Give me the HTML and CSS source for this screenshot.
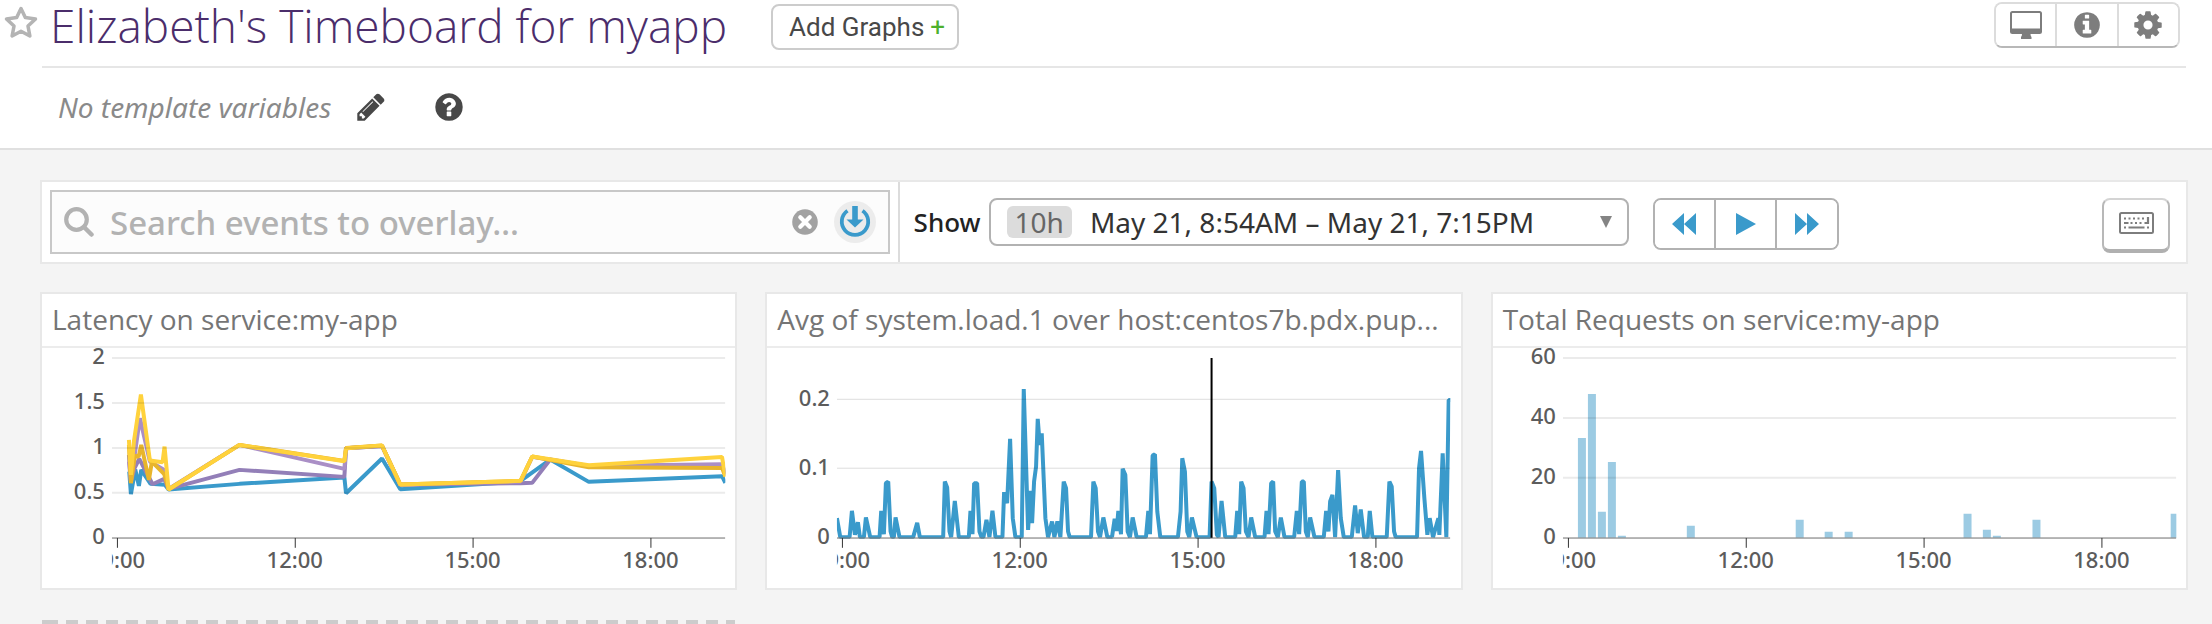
FILE: index.html
```html
<!DOCTYPE html>
<html lang="en">
<head>
<meta charset="utf-8">
<title>Elizabeth's Timeboard for myapp</title>
<link rel="stylesheet" href="styles.css">
</head>
<body>
<header class="header">
  <div class="title-row">
    <button class="star" aria-label="Favorite">
      <svg width="36" height="36" viewBox="0 0 36 36"><path d="M18 4.500 22.300 13.600 32.500 15 25 22.100 26.900 32 18 27.200 9.100 32 11 22.100 3.500 15 13.700 13.600Z" fill="none" stroke="#b4b4b4" stroke-width="3.500" stroke-linejoin="round"/></svg>
    </button>
    <h1 class="title">Elizabeth's Timeboard for myapp</h1>
    <button class="add-graphs">Add Graphs <span class="plus">+</span></button>
    <div class="button-group actions">
      <button aria-label="Full screen">
        <svg width="32" height="28" viewBox="0 0 32 28"><path fill="#7d7d7d" fill-rule="evenodd" d="M2.500 0h27A2.500 2.500 0 0 1 32 2.500v18a2.500 2.500 0 0 1-2.500 2.500H20.500q0 2 1 3v2H11v-2q1-1 1-3H2.500A2.500 2.500 0 0 1 0 20.500v-18A2.500 2.500 0 0 1 2.500 0zM2 2.500v15h28v-15q0-.5-.5-.5h-27q-.5 0-.5.500z"/></svg>
      </button>
      <button aria-label="Information">
        <svg width="30" height="30" viewBox="0 0 1792 1792"><path fill="#7d7d7d" d="M1152 1376v-160q0-14-9-23t-23-9h-96v-512q0-14-9-23t-23-9h-320q-14 0-23 9t-9 23v160q0 14 9 23t23 9h96v320h-96q-14 0-23 9t-9 23v160q0 14 9 23t23 9h448q14 0 23-9t9-23zm-128-896v-160q0-14-9-23t-23-9h-192q-14 0-23 9t-9 23v160q0 14 9 23t23 9h192q14 0 23-9t9-23zm640 416q0 209-103 385.500t-279.500 279.500-385.500 103-385.500-103-279.500-279.500-103-385.500 103-385.500 279.500-279.500 385.500-103 385.500 103 279.500 279.500 103 385.500z"/></svg>
      </button>
      <button aria-label="Settings">
        <svg width="32" height="32" viewBox="0 0 1792 1792"><path fill="#7d7d7d" d="M1152 896q0-106-75-181t-181-75-181 75-75 181 75 181 181 75 181-75 75-181zm512-109v222q0 12-8 23t-20 13l-185 28q-19 54-39 91 35 50 107 138 10 12 10 25t-9 23q-27 37-99 108t-94 71q-12 0-26-9l-138-108q-44 23-91 38-16 136-29 186-7 28-36 28h-222q-14 0-24.500-8.500t-11.500-21.500l-28-184q-49-16-90-37l-141 107q-10 9-25 9-14 0-25-11-126-114-165-168-7-10-7-23 0-12 8-23 15-21 51-66.500t54-70.500q-27-50-41-99l-183-27q-13-2-21-12.500t-8-23.500v-222q0-12 8-23t19-13l186-28q14-46 39-92-40-57-107-138-10-12-10-24 0-10 9-23 26-36 98.500-107.500t94.500-71.500q13 0 26 10l138 107q44-23 91-38 16-136 29-186 7-28 36-28h222q14 0 24.500 8.500t11.500 21.500l28 184q49 16 90 37l142-107q9-9 24-9 13 0 25 10 129 119 165 170 7 8 7 22 0 12-8 23-15 21-51 66.500t-54 70.500q26 50 41 98l183 28q13 2 21 12.500t8 23.500z"/></svg>
      </button>
    </div>
  </div>
  <div class="variables">
    <em>No template variables</em>
    <button class="plain" aria-label="Edit template variables">
      <svg width="32" height="32" viewBox="0 0 1792 1792"><path fill="#484848" d="M491 1536l91-91-235-235-91 91v107h128v128h107zm523-928q0-22-22-22-10 0-17 7l-542 542q-7 7-7 17 0 22 22 22 10 0 17-7l542-542q7-7 7-17zm-54-192l416 416-832 832h-416v-416zm683 96q0 53-37 90l-166 166-416-416 166-165q36-38 90-38 53 0 91 38l235 234q37 39 37 91z"/></svg>
    </button>
    <button class="plain help" aria-label="Help">
      <svg width="32" height="32" viewBox="0 0 1792 1792"><path fill="#484848" d="M1024 1376v-192q0-14-9-23t-23-9h-192q-14 0-23 9t-9 23v192q0 14 9 23t23 9h192q14 0 23-9t9-23zm256-672q0-88-55.500-163t-138.500-116-170-41q-243 0-371 213-15 24 8 42l132 100q7 6 19 6 16 0 25-12 53-68 86-92 34-24 86-24 48 0 85.500 26t37.500 59q0 38-20 61t-68 45q-63 28-115.500 86.500t-52.500 125.500v36q0 14 9 23t23 9h192q14 0 23-9t9-23q0-19 21.500-49.500t54.500-49.500q32-18 49-28.500t46-35 44.500-48 28-60.500 12.500-81zm384 192q0 209-103 385.500t-279.500 279.500-385.500 103-385.500-103-279.500-279.500-103-385.500 103-385.500 279.500-279.500 385.500-103 385.500 103 279.500 279.500 103 385.500z"/></svg>
    </button>
  </div>
</header>

<main class="board">
  <section class="toolbar">
    <div class="search-area">
      <div class="search-box">
        <svg class="search-icon" width="30" height="30" viewBox="0 0 30 30"><circle cx="12.500" cy="12.500" r="10.300" fill="none" stroke="#b2b2b2" stroke-width="4.200"/><path d="M20 20l7.500 7.500" stroke="#b2b2b2" stroke-width="4.500" stroke-linecap="round"/></svg>
        <input class="search-input" type="text" aria-label="Search events to overlay" placeholder="Search events to overlay…">
        <button class="plain" aria-label="Clear search">
          <svg width="26" height="26" viewBox="0 0 26 26"><circle cx="13" cy="13" r="12.800" fill="#a2a2a2"/><path d="M8.300 8.300l9.400 9.400M17.700 8.300l-9.400 9.400" stroke="#fff" stroke-width="4.200" stroke-linecap="round"/></svg>
        </button>
        <button class="plain" aria-label="Load events">
          <svg width="42" height="42" viewBox="0 0 42 42"><circle cx="21" cy="21" r="21" fill="#ececec"/><path d="M13.500 9.800A13.200 13.200 0 1 0 28.500 9.800" fill="none" stroke="#3a9acb" stroke-width="3.800"/><path d="M18.200 5h5.600v13.500h5.700L21 26.500l-8.500-8h5.700z" fill="#3a9acb"/></svg>
        </button>
      </div>
    </div>
    <div class="time-area">
      <label class="show-label" for="range">Show</label>
      <div class="range">
        <span class="chip">10h</span>
        <select id="range" class="range-select"><option>May 21, 8:54AM – May 21, 7:15PM</option></select>
        <svg class="caret" width="14" height="12" viewBox="0 0 14 12"><path d="M1 0h12L7 12z" fill="#848484"/></svg>
      </div>
      <div class="button-group playback">
        <button aria-label="Back"><svg width="24" height="22" viewBox="0 0 24 22"><path d="M12 0v22L0 11zM24 0v22L12 11z" fill="#3a9acb"/></svg></button>
        <button aria-label="Play"><svg width="22" height="22" viewBox="0 0 22 22"><path d="M1 0v22l20-11z" fill="#3a9acb"/></svg></button>
        <button aria-label="Forward"><svg width="24" height="22" viewBox="0 0 24 22"><path d="M0 0v22l12-11zM12 0v22l12-11z" fill="#3a9acb"/></svg></button>
      </div>
      <button class="keyboard" aria-label="Keyboard shortcuts">
        <svg width="35" height="22" viewBox="0 0 35 22"><rect x="1" y="1" width="33" height="20" rx="1.500" fill="none" stroke="#7d7d7d" stroke-width="2"/><path d="M5 6.500h2M9.500 6.500h2M14 6.500h2M18.500 6.500h2M23 6.500h2M5 11h4.500M11.500 11h2M16 11h2M20.500 11h2M25.500 11h4.500M29 5v7M5 15.500h2M9.500 15.500h16M28 15.500h2" stroke="#7d7d7d" stroke-width="2.200"/></svg>
      </button>
    </div>
  </section>

  <section class="graphs">
    <article class="graph">
      <h2 class="graph-title">Latency on service:my-app</h2>
      <svg class="plot" viewBox="0 0 694 240">
        <svg x="70" y="0" width="614" height="191" viewBox="0 0 1842 573">
          <g class="lines">
            <polyline class="blue" points="52,371 57,439 70,365 81,414 88,366 116,408 159,411 170,425 383,408 698,389 703,436 811,332 866,424 1224,401 1316,335 1432,402 1832,385 1842,405"/>
            <polyline class="violet" points="51,321 57,401 68,361 82,333 122,409 157,393 170,423 383,366 698,387 703,301 811,294 866,411 1227,406 1262,405 1316,335 1432,354 1832,351 1842,380"/>
            <polyline class="lilac" points="51,341 57,401 84,211 114,341 157,366 170,423 383,291 698,363 703,301 811,294 866,411 1227,401 1262,327 1432,354 1832,349 1842,375"/>
            <polyline class="gold" points="51,291 57,406 69,323 80,327 88,291 111,396 120,341 157,379 170,425 383,291 698,339 703,300 811,293 866,410 1227,399 1262,326 1432,358 1832,360 1842,386"/>
            <polyline class="yellow" points="51,276 57,381 66,281 87,140 114,338 152,343 158,296 170,425 383,291 698,340 703,301 811,293 866,410 1227,399 1262,326 1432,352 1832,327 1842,386"/>
          </g>
          <path class="grid" d="M0 30H1842M0 165H1842M0 300H1842M0 435H1842"/>
          <path class="axis" d="M0 571H1842"/>
        </svg>
        <g class="y-labels"><text x="63" y="16">2</text><text x="63" y="61">1.5</text><text x="63" y="106">1</text><text x="63" y="151">0.5</text><text x="63" y="196">0</text></g>
        <svg x="70" y="190" width="614" height="50"><path class="ticks" d="M5.500 0v10M183.500 0v10M361.500 0v10M539.500 0v10"/><g class="x-labels"><text x="5" y="30">09:00</text><text x="183" y="30">12:00</text><text x="361" y="30">15:00</text><text x="539" y="30">18:00</text></g></svg>
      </svg>
    </article>

    <article class="graph">
      <h2 class="graph-title">Avg of system.load.1 over host:centos7b.pdx.pup...</h2>
      <svg class="plot" viewBox="0 0 694 240">
        <svg x="70" y="0" width="614" height="191" viewBox="0 0 1842 573">
          <g class="lines">
            <polyline class="blue" transform="translate(-234 -189)" points="234,700 244,757 272,757 279,678 288,750 297,712 303,757 315,757 321,698 334,757 362,757 367,678 375,748 381,595 388,590 395,740 400,757 405,757 410,698 422,757 463,757 475,714 483,757 553,757 558,590 565,608 572,740 577,757 588,648 600,757 630,757 635,678 641,748 646,595 655,595 662,740 668,757 674,757 683,705 692,757 701,678 710,757 731,757 736,622 745,655 754,462 762,700 770,757 789,757 795,312 808,735 815,618 820,715 826,590 832,545 837,402 843,480 849,445 860,700 868,757 880,710 887,757 896,710 905,757 915,590 922,610 928,740 933,757 997,757 1004,590 1011,610 1018,740 1024,757 1034,698 1046,757 1062,757"/>
            <polyline class="blue" transform="translate(816 -189)" points="10,757 18,702 24,738 29,678 37,748 42,552 50,570 57,740 64,757 72,698 84,757 112,757 119,678 124,748 132,512 139,508 146,680 155,757 208,757 216,680 221,520 229,560 236,740 242,757 250,698 264,757 303,757 309,590 317,610 325,750 330,757 339,648 350,757 380,757 386,678 392,748 398,590 405,610 412,740 420,757 428,698 440,757 468,757 474,678 480,748 488,595 494,590 500,740 508,757 517,698 528,757 557,757 565,678 572,748 580,590 586,590 592,740 598,757 605,698 618,757 646,757 653,678 660,740 665,650 672,630 680,757 689,556 697,700 706,757 730,757 740,662 748,745 757,674 767,757 778,757 784,678 792,757 835,757 843,590 850,605 857,740 862,757 926,757 932,550 938,498 948,640 957,750 964,700 974,757 990,700 993,750 1003,505 1014,757 1021,345 1030,345"/>
          </g>
          <path class="grid thin" d="M0 154H1842M0 361H1842"/>
          <path class="axis" d="M0 571H1842"/>
          <path class="cursor" d="M1125 30V570"/>
        </svg>
        <g class="y-labels"><text x="63" y="58">0.2</text><text x="63" y="127">0.1</text><text x="63" y="196">0</text></g>
        <svg x="70" y="190" width="614" height="50"><path class="ticks" d="M5.500 0v10M183.500 0v10M361.500 0v10M539.500 0v10"/><g class="x-labels"><text x="5" y="30">09:00</text><text x="183" y="30">12:00</text><text x="361" y="30">15:00</text><text x="539" y="30">18:00</text></g></svg>
      </svg>
    </article>

    <article class="graph">
      <h2 class="graph-title">Total Requests on service:my-app</h2>
      <svg class="plot" viewBox="0 0 694 240">
        <svg x="70" y="0" width="614" height="191" viewBox="0 0 1842 573">
          <path class="bars" d="M45 270h24v300h-24zM75 138h24v432h-24zM105 492h24v78h-24zM135 342h24v228h-24zM165 564h24v6h-24zM372 534h24v36h-24zM699 516h24v54h-24zM786 552h24v18h-24zM846 552h24v18h-24zM1203 498h24v72h-24zM1261 546h24v24h-24zM1291 564h24v6h-24zM1410 516h24v54h-24zM1825 498h24v72h-24z"/>
          <path class="grid" d="M0 30H1842M0 210H1842M0 390H1842"/>
          <path class="axis" d="M0 571H1842"/>
        </svg>
        <g class="y-labels"><text x="63" y="16">60</text><text x="63" y="76">40</text><text x="63" y="136">20</text><text x="63" y="196">0</text></g>
        <svg x="70" y="190" width="614" height="50"><path class="ticks" d="M5.500 0v10M183.500 0v10M361.500 0v10M539.500 0v10"/><g class="x-labels"><text x="5" y="30">09:00</text><text x="183" y="30">12:00</text><text x="361" y="30">15:00</text><text x="539" y="30">18:00</text></g></svg>
      </svg>
    </article>

    <div class="drop-zone"></div>
  </section>
</main>
</body>
</html>
```
FILE: styles.css
```css
* { box-sizing: border-box; }

body {
  margin: 0;
  background: #f4f4f4;
  color: #333;
  font-family: "Noto Sans", "Open Sans", sans-serif;
}

button {
  display: flex;
  align-items: center;
  justify-content: center;
  padding: 0;
  font: inherit;
  color: inherit;
  background: #fff;
  border: 0;
  cursor: pointer;
}

svg { display: block; flex: none; }

.plain { background: none; }

.header {
  padding-bottom: 2px;
  background: #fff;
  border-bottom: 2px solid #e0e0e0;
}

.title-row {
  display: flex;
  align-items: flex-start;
  height: 66px;
  padding-right: 32px;
}

.star { width: 42px; height: 44px; background: none; }

.title {
  margin: 0 0 0 8px;
  font-family: "Open Sans", sans-serif;
  font-size: 46px;
  font-weight: 300;
  line-height: 50px;
  color: #4b2d6b;
  white-space: nowrap;
}

.add-graphs {
  height: 46px;
  margin: 4px 0 0 44px;
  padding: 0 12px 0 16px;
  gap: 6px;
  border: 2px solid #ccc;
  border-radius: 8px;
  font-family: Roboto, sans-serif;
  font-size: 26px;
  color: #484848;
  white-space: nowrap;
}

.plus { color: #4db02c; }

.button-group {
  display: flex;
  border: 2px solid #b2b2b2;
  border-radius: 8px;
  overflow: hidden;
}

.button-group button + button { border-left: 2px solid #b2b2b2; }

.actions {
  width: 186px;
  height: 46px;
  margin: 2px 0 0 auto;
  border-color: #dcdcdc #dcdcdc #b8b8b8;
}

.actions button { flex: 1; }
.actions button + button { border-color: #dcdcdc; }

.variables {
  display: flex;
  align-items: center;
  height: 80px;
  margin: 0 26px 0 42px;
  padding-left: 16px;
  border-top: 2px solid #e6e6e6;
  font-size: 28px;
  color: #8a8a8a;
}

.variables em { margin-right: 24px; }
.help { margin-left: 46px; }

.board { padding: 30px 24px 0 40px; }

.toolbar {
  display: flex;
  height: 84px;
  background: #fff;
  border: 2px solid #e8e8e8;
}

.search-area { width: calc(40% - 2px); padding: 8px; }

.search-box {
  display: flex;
  align-items: center;
  height: 64px;
  padding: 0 12px;
  background: #fcfcfc;
  border: 2px solid #c8c8c8;
}

.search-input {
  flex: 1;
  min-width: 0;
  padding: 0 0 0 16px;
  border: 0;
  outline: 0;
  background: none;
  font: 500 33px "Noto Sans", sans-serif;
}

.search-input::placeholder { color: #b2b2b2; opacity: 1; }
.search-box .plain + .plain { margin-left: 16px; }

.time-area {
  display: flex;
  flex: 1;
  align-items: flex-start;
  padding: 16px 16px 0 14px;
  border-left: 2px solid #dcdcdc;
}

.show-label {
  margin-right: 8px;
  font-size: 26px;
  font-weight: 500;
  line-height: 48px;
  color: #222;
}

.range {
  display: flex;
  align-items: center;
  width: 640px;
  height: 48px;
  padding: 0 14px 0 16px;
  border: 2px solid #b2b2b2;
  border-radius: 8px;
}

.chip {
  padding: 0 8px;
  border-radius: 6px;
  background: #dcdcdc;
  color: #666;
  font-size: 28px;
  line-height: 32px;
}

.range-select {
  flex: 1;
  height: 40px;
  padding: 0;
  margin-left: 18px;
  border: 0;
  outline: 0;
  appearance: none;
  background: none;
  font: 400 28px "Noto Sans", sans-serif;
  color: #333;
}

.playback { width: 186px; height: 52px; margin-left: 24px; }
.playback button { flex: 1; }

.keyboard {
  width: 68px;
  height: 55px;
  margin-left: auto;
  border: 2px solid #b8b8b8;
  border-top-color: #d4d4d4;
  border-bottom: 4px solid #b0b0b0;
  border-radius: 8px;
  padding-bottom: 4px;
}

.graphs {
  display: grid;
  grid-template-columns: repeat(3, minmax(0, 1fr));
  column-gap: 28px;
  row-gap: 30px;
  margin-top: 28px;
}

.graph { background: #fff; border: 2px solid #e8e8e8; }

.graph-title {
  margin: 0;
  height: 54px;
  padding: 0 10px;
  border-bottom: 2px solid #ececec;
  font-family: "Open Sans", sans-serif;
  font-size: 28px;
  font-weight: 400;
  line-height: 50px;
  color: #757575;
  white-space: nowrap;
  overflow: hidden;
  text-overflow: ellipsis;
}

.plot { width: 100%; height: auto; font-size: 22px; }

.lines { fill: none; stroke-width: 12; stroke-linejoin: bevel; }
.blue { stroke: #3a9acb; }
.violet { stroke: #937fb8; }
.lilac { stroke: #aa8fc6; }
.gold { stroke: #e8b52c; }
.yellow { stroke: #ffd23c; }
.bars { fill: #9ccbe3; }
.grid { stroke: rgba(0, 0, 0, 0.08); stroke-width: 6; }
.grid.thin { stroke: rgba(0, 0, 0, 0.14); stroke-width: 3; }
.axis { stroke: #777; stroke-width: 4; }
.cursor { stroke: #000; stroke-width: 6; }
.ticks { stroke: #333; stroke-width: 1; }
.y-labels { text-anchor: end; fill: #5c5c5c; font-weight: 500; }
.x-labels { text-anchor: middle; fill: #5c5c5c; font-weight: 500; }

.drop-zone {
  height: 4px;
  margin: 0 2px;
  border: solid #ccc;
  border-width: 0 4px;
  background: repeating-linear-gradient(90deg, #ccc 0 12px, transparent 12px 20px);
}
```
